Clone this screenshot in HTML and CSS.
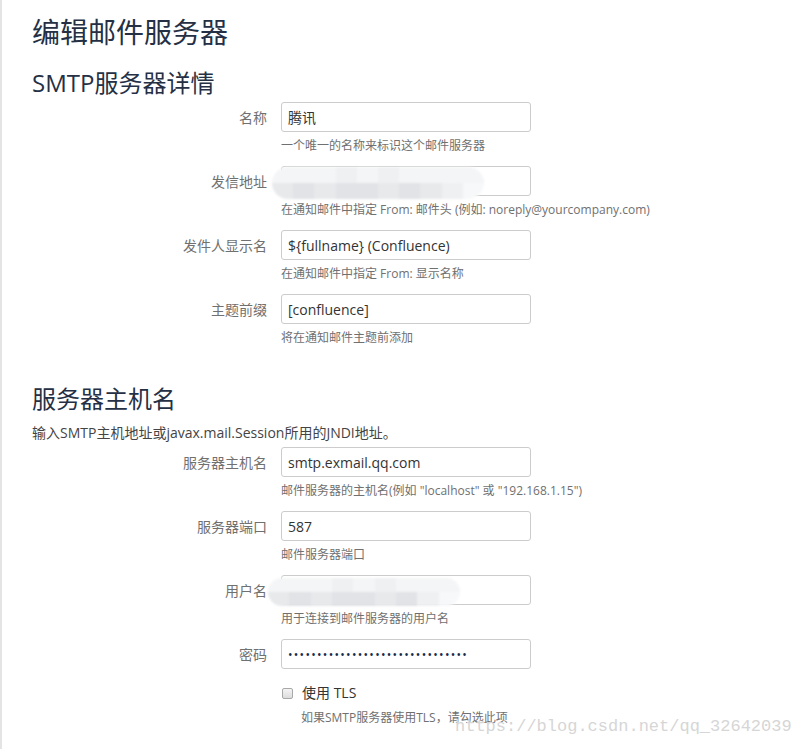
FILE: index.html
```html
<!DOCTYPE html>
<html lang="zh-CN">
<head>
<meta charset="utf-8">
<title>编辑邮件服务器</title>
<link rel="stylesheet" href="styles.css">
</head>
<body>
<div class="page">
  <h1 class="title">编辑邮件服务器</h1>
  <h2 class="section">SMTP服务器详情</h2>

  <div class="field">
    <div class="row"><label class="lbl">名称</label><div class="ctl"><input class="txt" type="text" value="腾讯"></div></div>
    <div class="help">一个唯一的名称来标识这个邮件服务器</div>
  </div>
  <div class="field">
    <div class="row"><label class="lbl">发信地址</label><div class="ctl"><input class="txt" type="text" value="">
      <div class="mosaic m1">
        <div class="mrow top"><i></i><i></i><i></i><i></i><i></i><i></i><i></i><i></i><i></i><i></i></div>
        <div class="mrow bot"><i class="a"></i><i class="b"></i><i class="a"></i><i class="b"></i><i class="b"></i><i class="a"></i><i class="b"></i><i class="a"></i><i class="c"></i><i class="d"></i></div>
      </div>
    </div></div>
    <div class="help">在通知邮件中指定 From: 邮件头 (例如: noreply@yourcompany.com)</div>
  </div>
  <div class="field">
    <div class="row"><label class="lbl">发件人显示名</label><div class="ctl"><input class="txt" type="text" value="${fullname} (Confluence)"></div></div>
    <div class="help">在通知邮件中指定 From: 显示名称</div>
  </div>
  <div class="field">
    <div class="row"><label class="lbl">主题前缀</label><div class="ctl"><input class="txt" type="text" value="[confluence]"></div></div>
    <div class="help">将在通知邮件主题前添加</div>
  </div>

  <h2 class="section second">服务器主机名</h2>
  <p class="desc">输入SMTP主机地址或javax.mail.Session所用的JNDI地址。</p>

  <div class="field">
    <div class="row"><label class="lbl">服务器主机名</label><div class="ctl"><input class="txt" type="text" value="smtp.exmail.qq.com"></div></div>
    <div class="help">邮件服务器的主机名(例如 "localhost" 或 "192.168.1.15")</div>
  </div>
  <div class="field">
    <div class="row"><label class="lbl">服务器端口</label><div class="ctl"><input class="txt" type="text" value="587"></div></div>
    <div class="help">邮件服务器端口</div>
  </div>
  <div class="field">
    <div class="row"><label class="lbl">用户名</label><div class="ctl"><input class="txt" type="text" value="">
      <div class="mosaic m2">
        <div class="mrow top"><i></i><i></i><i></i><i></i><i></i><i></i><i></i><i></i><i></i></div>
        <div class="mrow bot"><i class="a"></i><i class="b"></i><i class="a"></i><i class="b"></i><i class="b"></i><i class="a"></i><i class="b"></i><i class="c"></i><i class="d"></i></div>
      </div>
    </div></div>
    <div class="help">用于连接到邮件服务器的用户名</div>
  </div>
  <div class="field last">
    <div class="row"><label class="lbl">密码</label><div class="ctl"><input class="txt pw" type="password" value="abcdefghijklmnopqrstuvwxyz12345"></div></div>
  </div>

  <div class="check">
    <input class="cb" type="checkbox" id="tls"><label for="tls" class="cbl">使用 TLS</label>
  </div>
  <div class="help chelp">如果SMTP服务器使用TLS，请勾选此项</div>
</div>
<div class="watermark">https://blog.csdn.net/qq_32642039</div>
</body>
</html>
```

FILE: styles.css
```css
html, body {
  margin: 0;
  padding: 0;
  background: #fff;
  height: 100%;
  overflow: hidden;
}
body {
  font-family: "Open Sans", "Noto Sans CJK SC", sans-serif;
  color: #333;
  position: relative;
}
.page {
  border-left: 2px solid #e4e4e4;
  padding: 14px 0 40px 30px;
  min-height: 749px;
  box-sizing: border-box;
}
.title {
  margin: 0;
  font-size: 28px;
  line-height: 36px;
  font-weight: 400;
  color: #253045;
}
.section {
  margin: 18px 0 4px;
  font-size: 24px;
  line-height: 30px;
  font-weight: 400;
  color: #253045;
}
.section.second {
  margin-top: 38px;
  margin-bottom: 0;
}
.desc {
  margin: 9px 0 4px;
  font-size: 14px;
  line-height: 20px;
  color: #444;
}
.field {
  margin-bottom: 12px;
}
.field.last {
  margin-bottom: 0;
}
.row {
  display: flex;
  align-items: center;
  gap: 14px;
  height: 30px;
}
.lbl {
  width: 235px;
  flex: none;
  text-align: right;
  font-size: 14px;
  color: #707070;
}
.ctl {
  position: relative;
  width: 250px;
  height: 30px;
}
.txt {
  box-sizing: border-box;
  width: 250px;
  height: 30px;
  margin: 0;
  border: 1px solid #cccccc;
  border-radius: 3px;
  padding: 0 6px;
  font-family: "Open Sans", "Noto Sans CJK SC", sans-serif;
  font-size: 14px;
  color: #333;
  background: #fff;
  outline: none;
}
.pw {
  letter-spacing: 1.3px;
  font-size: 12px;
  color: #172b4d;
}
.help {
  margin: 6px 0 0 249px;
  font-size: 12px;
  line-height: 16px;
  color: #707070;
}
.check {
  display: flex;
  align-items: center;
  margin: 14px 0 0 249px;
  height: 20px;
}
.cb {
  -webkit-appearance: none;
  appearance: none;
  box-sizing: border-box;
  margin: 0 9px 0 1px;
  width: 11px;
  height: 11px;
  border: 1px solid #a8a8a8;
  border-radius: 2px;
  background: linear-gradient(#f4f4f4, #dcdcdc);
}
.cbl {
  font-size: 14px;
  line-height: 20px;
  color: #333;
}
.chelp {
  margin: 7px 0 0 269px;
}
.mosaic {
  position: absolute;
  display: flex;
  flex-direction: column;
  border-radius: 16px;
  overflow: hidden;
  filter: blur(1.2px);
}
.m1 {
  left: -9px;
  top: 1px;
  width: 212px;
  height: 32px;
}
.m2 {
  left: -13px;
  top: 3px;
  width: 192px;
  height: 28px;
}
.mrow {
  display: flex;
  flex: 1;
}
.mrow i {
  flex: 1;
  display: block;
}
.mrow.top i {
  background: #f4f5f6;
}
.mrow.top i:nth-child(4), .mrow.top i:nth-child(6) {
  background: #eff0f2;
}
.mrow.bot i { background: #ececee; }
.mrow.bot i.a { background: #e8e9eb; }
.mrow.bot i.b { background: #e2e3e6; }
.mrow.bot i.c { background: #eff0f2; }
.mrow.bot i.d { background: #f7f8f9; }
.watermark {
  position: absolute;
  left: 455px;
  top: 716px;
  font-family: "Liberation Mono", monospace;
  font-size: 17px;
  line-height: 22px;
  color: #d6d6d6;
  white-space: nowrap;
}
```
